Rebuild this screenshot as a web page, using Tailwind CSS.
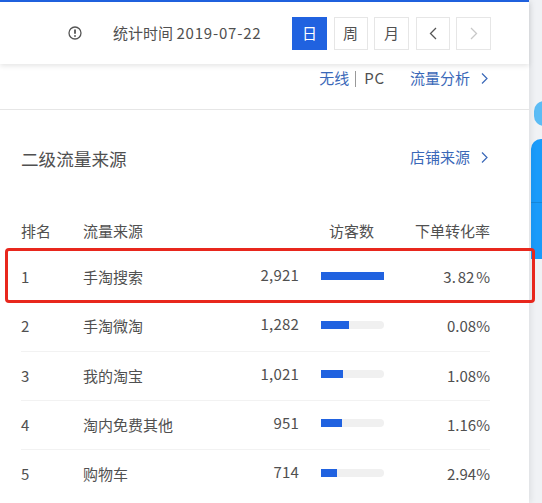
<!DOCTYPE html>
<html lang="zh-CN">
<head>
    <meta charset="UTF-8">
    <script src="https://cdn.jsdelivr.net/npm/@tailwindcss/browser@4"></script>
    <title>流量来源</title>
</head>
<body class="w-[542px] h-[503px] overflow-hidden bg-[#f0f2f5] font-['Noto_Sans_CJK_SC','Noto_Sans',sans-serif] text-[15px] text-[#505050]">
    <div class="relative h-[503px]">
        <!-- right edge of the page behind the panel -->
        <div class="absolute left-[534px] top-[101px] w-[20px] h-[25px] rounded-full bg-[#5bbcf5]"></div>
        <div class="absolute left-[531px] top-[139px] w-[30px] h-[120px] rounded-tl-[10px] bg-[#1a9bfa]">
            <div class="mt-[63px] h-px bg-[#1488dc]"></div>
        </div>

        <div class="relative w-[529px] h-[503px] bg-white shadow-[2px_0_6px_rgba(0,0,0,0.08)]">
            <div class="h-[2px] bg-[#2062e0]"></div>
            <!-- toolbar -->
            <div class="flex items-center h-[62px] bg-white shadow-[0_2px_5px_rgba(0,0,0,0.1)] pl-[68px]">
                <svg class="w-[14px] h-[14px] text-[#555]" viewBox="0 0 14 14" fill="none" stroke="currentColor">
                    <circle cx="7" cy="7" r="6" stroke-width="1.3"/>
                    <path d="M7 3.4v4.4M7 9.3v1.4" stroke-width="1.8"/>
                </svg>
                <span class="ml-[31px] w-[179px]">统计时间 <span class="tracking-[0.8px]">2019-07-22</span></span>
                <div class="flex gap-[6.5px]">
                    <button class="w-[35px] h-[33px] bg-[#2062e0] text-white">日</button>
                    <button class="w-[34px] h-[33px] border border-[#e6e6e6]">周</button>
                    <button class="w-[35px] h-[33px] border border-[#e6e6e6]">月</button>
                    <button class="w-[34px] h-[33px] border border-[#e6e6e6] flex items-center justify-center">
                        <svg class="w-[8px] h-[13px]" viewBox="0 0 8 13" fill="none" stroke="#555" stroke-width="1.3"><path d="M7 1 1.5 6.5 7 12"/></svg>
                    </button>
                    <button class="w-[35px] h-[33px] border border-[#e6e6e6] flex items-center justify-center">
                        <svg class="w-[8px] h-[13px]" viewBox="0 0 8 13" fill="none" stroke="#c8c8c8" stroke-width="1.3"><path d="M1 1l5.5 5.5L1 12"/></svg>
                    </button>
                </div>
            </div>
            <!-- links -->
            <div class="flex justify-end items-center h-[46px] pb-[16px] pr-[41px] border-b border-[#e6e6e6]">
                <span class="text-[#3a68b8]">无线</span>
                <span class="ml-[6px] mr-[8px] w-px h-[16px] bg-[#999]"></span>
                <span class="tracking-[0.8px]">PC</span>
                <span class="ml-[25px] text-[#3a68b8]">流量分析</span>
                <svg class="ml-[11px] w-[7px] h-[11px]" viewBox="0 0 7 11" fill="none" stroke="#3a68b8" stroke-width="1.2"><path d="M1 .5l5 5-5 5"/></svg>
            </div>
            <!-- title -->
            <div class="flex justify-between items-center pl-[21px] pr-[41px] mt-[35px] h-[28px]">
                <h2 class="text-[17.6px] font-normal">二级流量来源</h2>
                <div class="flex items-center mb-[4px] text-[#3a68b8]">
                    <span>店铺来源</span>
                    <svg class="ml-[11px] w-[7px] h-[11px]" viewBox="0 0 7 11" fill="none" stroke="#3a68b8" stroke-width="1.2"><path d="M1 .5l5 5-5 5"/></svg>
                </div>
            </div>
            <!-- table -->
            <div class="mt-[45px] ml-[21px] w-[469px]">
                <div class="grid grid-cols-[62px_100px_116px_22px_63px_106px] items-center h-[33px] pb-[6px]">
                    <span>排名</span>
                    <span>流量来源</span>
                    <span></span>
                    <span class="col-span-2 text-right pr-[10px]">访客数</span>
                    <span class="text-right">下单转化率</span>
                </div>
                <div class="grid grid-cols-[62px_100px_116px_22px_63px_106px] items-center h-[51px] pt-[2px]">
                    <span>1</span>
                    <span>手淘搜索</span>
                    <span class="text-right mb-[4px] tracking-[0.2px]">2,921</span>
                    <span></span>
                    <div class="h-[8px] mb-[4px] bg-[#f0f0f0]"><div class="h-full bg-[#2062e0]" style="width: 100%"></div></div>
                    <span class="text-right [word-spacing:-1.5px]">3. 82 %</span>
                </div>
                <div class="grid grid-cols-[62px_100px_116px_22px_63px_106px] items-center h-[50px] border-b border-[#f2f2f2]">
                    <span>2</span>
                    <span>手淘微淘</span>
                    <span class="text-right mb-[4px] tracking-[0.2px]">1,282</span>
                    <span></span>
                    <div class="h-[8px] mb-[4px] bg-[#f0f0f0] rounded-r-full"><div class="h-full bg-[#2062e0]" style="width: 44%"></div></div>
                    <span class="text-right">0.08%</span>
                </div>
                <div class="grid grid-cols-[62px_100px_116px_22px_63px_106px] items-center h-[49px] border-b border-[#f2f2f2]">
                    <span>3</span>
                    <span>我的淘宝</span>
                    <span class="text-right mb-[4px] tracking-[0.2px]">1,021</span>
                    <span></span>
                    <div class="h-[8px] mb-[4px] bg-[#f0f0f0] rounded-r-full"><div class="h-full bg-[#2062e0]" style="width: 35%"></div></div>
                    <span class="text-right">1.08%</span>
                </div>
                <div class="grid grid-cols-[62px_100px_116px_22px_63px_106px] items-center h-[49px] border-b border-[#f2f2f2]">
                    <span>4</span>
                    <span>淘内免费其他</span>
                    <span class="text-right mb-[4px] tracking-[0.2px]">951</span>
                    <span></span>
                    <div class="h-[8px] mb-[4px] bg-[#f0f0f0] rounded-r-full"><div class="h-full bg-[#2062e0]" style="width: 33%"></div></div>
                    <span class="text-right">1.16%</span>
                </div>
                <div class="grid grid-cols-[62px_100px_116px_22px_63px_106px] items-center h-[49px]">
                    <span>5</span>
                    <span>购物车</span>
                    <span class="text-right mb-[4px] tracking-[0.2px]">714</span>
                    <span></span>
                    <div class="h-[8px] mb-[4px] bg-[#f0f0f0] rounded-r-full"><div class="h-full bg-[#2062e0]" style="width: 25%"></div></div>
                    <span class="text-right">2.94%</span>
                </div>
            </div>
        </div>

        <!-- red annotation drawn over the first row -->
        <div class="absolute left-[5px] top-[248px] w-[530px] h-[55px] border-[3px] border-[#e8271d] rounded-[4px]"></div>
    </div>
</body>
</html>
